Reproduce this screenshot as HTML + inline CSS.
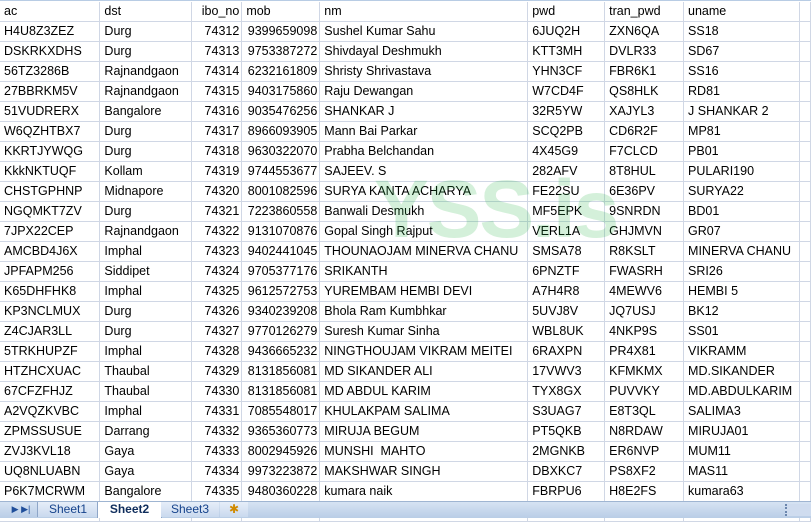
<!DOCTYPE html>
<html><head><meta charset="utf-8"><style>
body{margin:0;width:811px;height:517px;overflow:hidden;background:#fff;font-family:"Liberation Sans",sans-serif;font-size:12.5px;color:#000;position:relative}
.topline{position:absolute;left:0;top:0;width:811px;height:1px;background:#b8cce4}
table{border-collapse:collapse;table-layout:fixed;position:absolute;left:0;top:2px}
td{height:19px;padding:0 0 0 4px;border-right:1px solid #d0d7e5;border-bottom:1px solid #d0d7e5;white-space:nowrap;overflow:hidden;line-height:19px}
td.n{text-align:right;padding:0 2px 0 0}
.wm{position:absolute;left:374px;top:163px;font-size:82px;font-weight:bold;color:rgba(40,180,70,0.2);letter-spacing:-2px;font-family:"Liberation Sans",sans-serif}
.bar{position:absolute;left:0;top:501px;width:811px;height:16px;background:linear-gradient(#d6e3f3,#b9cde6);border-top:1px solid #9fb5d2}
.tab{position:absolute;top:0;height:15px;line-height:15px;font-size:12px;color:#15428b;text-align:center}
</style></head><body>
<div class="topline"></div>
<table>
<colgroup><col style="width:100px"><col style="width:92px"><col style="width:50px"><col style="width:78px"><col style="width:208px"><col style="width:77px"><col style="width:79px"><col style="width:116px"><col style="width:11px"></colgroup>
<tr><td>ac</td><td>dst</td><td class="n">ibo_no</td><td>mob</td><td>nm</td><td>pwd</td><td>tran_pwd</td><td>uname</td><td></td></tr>
<tr><td>H4U8Z3ZEZ</td><td>Durg</td><td class="n">74312</td><td class="n">9399659098</td><td>Sushel Kumar Sahu</td><td>6JUQ2H</td><td>ZXN6QA</td><td>SS18</td><td></td></tr>
<tr><td>DSKRKXDHS</td><td>Durg</td><td class="n">74313</td><td class="n">9753387272</td><td>Shivdayal Deshmukh</td><td>KTT3MH</td><td>DVLR33</td><td>SD67</td><td></td></tr>
<tr><td>56TZ3286B</td><td>Rajnandgaon</td><td class="n">74314</td><td class="n">6232161809</td><td>Shristy Shrivastava</td><td>YHN3CF</td><td>FBR6K1</td><td>SS16</td><td></td></tr>
<tr><td>27BBRKM5V</td><td>Rajnandgaon</td><td class="n">74315</td><td class="n">9403175860</td><td>Raju Dewangan</td><td>W7CD4F</td><td>QS8HLK</td><td>RD81</td><td></td></tr>
<tr><td>51VUDRERX</td><td>Bangalore</td><td class="n">74316</td><td class="n">9035476256</td><td>SHANKAR J</td><td>32R5YW</td><td>XAJYL3</td><td>J SHANKAR 2</td><td></td></tr>
<tr><td>W6QZHTBX7</td><td>Durg</td><td class="n">74317</td><td class="n">8966093905</td><td>Mann Bai Parkar</td><td>SCQ2PB</td><td>CD6R2F</td><td>MP81</td><td></td></tr>
<tr><td>KKRTJYWQG</td><td>Durg</td><td class="n">74318</td><td class="n">9630322070</td><td>Prabha Belchandan</td><td>4X45G9</td><td>F7CLCD</td><td>PB01</td><td></td></tr>
<tr><td>KkkNKTUQF</td><td>Kollam</td><td class="n">74319</td><td class="n">9744553677</td><td>SAJEEV. S</td><td>282AFV</td><td>8T8HUL</td><td>PULARI190</td><td></td></tr>
<tr><td>CHSTGPHNP</td><td>Midnapore</td><td class="n">74320</td><td class="n">8001082596</td><td>SURYA KANTA ACHARYA</td><td>FE22SU</td><td>6E36PV</td><td>SURYA22</td><td></td></tr>
<tr><td>NGQMKT7ZV</td><td>Durg</td><td class="n">74321</td><td class="n">7223860558</td><td>Banwali Desmukh</td><td>MF5EPK</td><td>9SNRDN</td><td>BD01</td><td></td></tr>
<tr><td>7JPX22CEP</td><td>Rajnandgaon</td><td class="n">74322</td><td class="n">9131070876</td><td>Gopal Singh Rajput</td><td>VERL1A</td><td>GHJMVN</td><td>GR07</td><td></td></tr>
<tr><td>AMCBD4J6X</td><td>Imphal</td><td class="n">74323</td><td class="n">9402441045</td><td>THOUNAOJAM MINERVA CHANU</td><td>SMSA78</td><td>R8KSLT</td><td>MINERVA CHANU</td><td></td></tr>
<tr><td>JPFAPM256</td><td>Siddipet</td><td class="n">74324</td><td class="n">9705377176</td><td>SRIKANTH</td><td>6PNZTF</td><td>FWASRH</td><td>SRI26</td><td></td></tr>
<tr><td>K65DHFHK8</td><td>Imphal</td><td class="n">74325</td><td class="n">9612572753</td><td>YUREMBAM HEMBI DEVI</td><td>A7H4R8</td><td>4MEWV6</td><td>HEMBI 5</td><td></td></tr>
<tr><td>KP3NCLMUX</td><td>Durg</td><td class="n">74326</td><td class="n">9340239208</td><td>Bhola Ram Kumbhkar</td><td>5UVJ8V</td><td>JQ7USJ</td><td>BK12</td><td></td></tr>
<tr><td>Z4CJAR3LL</td><td>Durg</td><td class="n">74327</td><td class="n">9770126279</td><td>Suresh Kumar Sinha</td><td>WBL8UK</td><td>4NKP9S</td><td>SS01</td><td></td></tr>
<tr><td>5TRKHUPZF</td><td>Imphal</td><td class="n">74328</td><td class="n">9436665232</td><td>NINGTHOUJAM VIKRAM MEITEI</td><td>6RAXPN</td><td>PR4X81</td><td>VIKRAMM</td><td></td></tr>
<tr><td>HTZHCXUAC</td><td>Thaubal</td><td class="n">74329</td><td class="n">8131856081</td><td>MD SIKANDER ALI</td><td>17VWV3</td><td>KFMKMX</td><td>MD.SIKANDER</td><td></td></tr>
<tr><td>67CFZFHJZ</td><td>Thaubal</td><td class="n">74330</td><td class="n">8131856081</td><td>MD ABDUL KARIM</td><td>TYX8GX</td><td>PUVVKY</td><td>MD.ABDULKARIM</td><td></td></tr>
<tr><td>A2VQZKVBC</td><td>Imphal</td><td class="n">74331</td><td class="n">7085548017</td><td>KHULAKPAM SALIMA</td><td>S3UAG7</td><td>E8T3QL</td><td>SALIMA3</td><td></td></tr>
<tr><td>ZPMSSUSUE</td><td>Darrang</td><td class="n">74332</td><td class="n">9365360773</td><td>MIRUJA BEGUM</td><td>PT5QKB</td><td>N8RDAW</td><td>MIRUJA01</td><td></td></tr>
<tr><td>ZVJ3KVL18</td><td>Gaya</td><td class="n">74333</td><td class="n">8002945926</td><td>MUNSHI &nbsp;MAHTO</td><td>2MGNKB</td><td>ER6NVP</td><td>MUM11</td><td></td></tr>
<tr><td>UQ8NLUABN</td><td>Gaya</td><td class="n">74334</td><td class="n">9973223872</td><td>MAKSHWAR SINGH</td><td>DBXKC7</td><td>PS8XF2</td><td>MAS11</td><td></td></tr>
<tr><td>P6K7MCRWM</td><td>Bangalore</td><td class="n">74335</td><td class="n">9480360228</td><td>kumara naik</td><td>FBRPU6</td><td>H8E2FS</td><td>kumara63</td><td></td></tr>
<tr><td></td><td></td><td></td><td></td><td></td><td></td><td></td><td></td><td></td></tr>
</table>
<div class="wm">YSS.is</div>
<div class="bar">
<div class="tab" style="left:8px;width:26px;font-size:9px;color:#1f4e9a">&#9654;&nbsp;&#9654;|</div>
<div class="tab" style="left:37px;width:60px;background:linear-gradient(#e6eef9,#c9d9ee);border-left:1px solid #8ea6c8">Sheet1</div>
<div class="tab" style="left:97px;width:63px;background:#fff;font-weight:bold;color:#0f2d5c;height:16px;border-left:1px solid #8ea6c8;border-right:1px solid #8ea6c8">Sheet2</div>
<div class="tab" style="left:161px;width:58px;background:linear-gradient(#e6eef9,#c9d9ee)">Sheet3</div>
<div class="tab" style="left:220px;width:28px;background:linear-gradient(#e6eef9,#c9d9ee);color:#d08a00">&#10033;</div>
<div style="position:absolute;left:785px;top:2px;width:24px;height:12px;background:#cfdcef;border-left:2px dotted #6b86ad"></div>
</div>
</body></html>
